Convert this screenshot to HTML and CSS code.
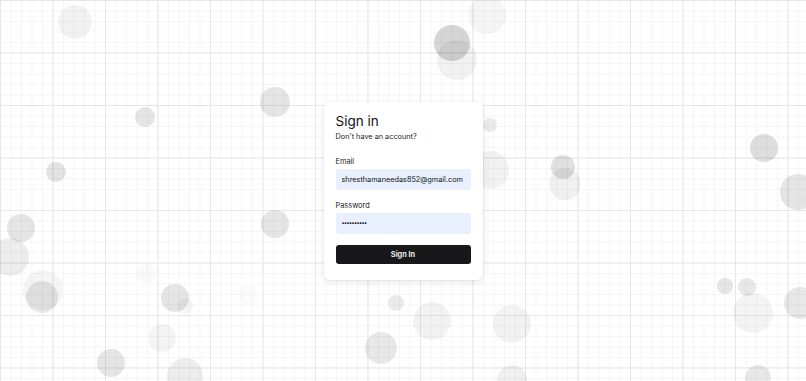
FILE: index.html
```html
<!DOCTYPE html>
<html lang="en">
<head>
<meta charset="utf-8">
<title>Sign in</title>
<link rel="stylesheet" href="styles.css">
</head>
<body>
<div class="page">
  <div class="bubbles">
    <span class="bubble" style="left:58px;top:5px;width:34px;height:34px;opacity:.05"></span>
    <span class="bubble" style="left:434px;top:25px;width:36px;height:36px;opacity:.16"></span>
    <span class="bubble" style="left:468px;top:-4px;width:38px;height:38px;opacity:.04"></span>
    <span class="bubble" style="left:437px;top:40px;width:40px;height:40px;opacity:.05"></span>
    <span class="bubble" style="left:135px;top:107px;width:20px;height:20px;opacity:.10"></span>
    <span class="bubble" style="left:260px;top:87px;width:30px;height:30px;opacity:.10"></span>
    <span class="bubble" style="left:483px;top:118px;width:14px;height:14px;opacity:.08"></span>
    <span class="bubble" style="left:46px;top:162px;width:20px;height:20px;opacity:.11"></span>
    <span class="bubble" style="left:471px;top:151px;width:38px;height:38px;opacity:.05"></span>
    <span class="bubble" style="left:551px;top:155px;width:24px;height:24px;opacity:.12"></span>
    <span class="bubble" style="left:549px;top:168px;width:32px;height:32px;opacity:.06"></span>
    <span class="bubble" style="left:750px;top:134px;width:28px;height:28px;opacity:.13"></span>
    <span class="bubble" style="left:780px;top:174px;width:36px;height:36px;opacity:.10"></span>
    <span class="bubble" style="left:7px;top:214px;width:28px;height:28px;opacity:.10"></span>
    <span class="bubble" style="left:-9px;top:238px;width:38px;height:38px;opacity:.07"></span>
    <span class="bubble" style="left:261px;top:210px;width:28px;height:28px;opacity:.10"></span>
    <span class="bubble" style="left:26px;top:281px;width:32px;height:32px;opacity:.09"></span>
    <span class="bubble" style="left:23px;top:270px;width:40px;height:40px;opacity:.04"></span>
    <span class="bubble" style="left:136px;top:263px;width:20px;height:20px;opacity:.025"></span>
    <span class="bubble" style="left:238px;top:285px;width:20px;height:20px;opacity:.015"></span>
    <span class="bubble" style="left:161px;top:284px;width:28px;height:28px;opacity:.10"></span>
    <span class="bubble" style="left:177px;top:298px;width:16px;height:16px;opacity:.035"></span>
    <span class="bubble" style="left:148px;top:324px;width:28px;height:28px;opacity:.045"></span>
    <span class="bubble" style="left:97px;top:349px;width:28px;height:28px;opacity:.10"></span>
    <span class="bubble" style="left:167px;top:358px;width:36px;height:36px;opacity:.07"></span>
    <span class="bubble" style="left:388px;top:295px;width:16px;height:16px;opacity:.08"></span>
    <span class="bubble" style="left:413px;top:302px;width:38px;height:38px;opacity:.05"></span>
    <span class="bubble" style="left:493px;top:305px;width:38px;height:38px;opacity:.05"></span>
    <span class="bubble" style="left:365px;top:332px;width:32px;height:32px;opacity:.09"></span>
    <span class="bubble" style="left:497px;top:365px;width:30px;height:30px;opacity:.06"></span>
    <span class="bubble" style="left:717px;top:278px;width:16px;height:16px;opacity:.10"></span>
    <span class="bubble" style="left:738px;top:278px;width:18px;height:18px;opacity:.09"></span>
    <span class="bubble" style="left:733px;top:293px;width:40px;height:40px;opacity:.045"></span>
    <span class="bubble" style="left:784px;top:287px;width:32px;height:32px;opacity:.09"></span>
    <span class="bubble" style="left:745px;top:365px;width:26px;height:26px;opacity:.09"></span>
  </div>

  <form class="card">
    <h1 class="title">Sign in</h1>
    <p class="subtitle">Don't have an account?</p>

    <label class="label label-first" for="email">Email</label>
    <input class="field" id="email" type="text" value="shresthamaneedas852@gmail.com">

    <label class="label" for="password">Password</label>
    <input class="field field-pass" id="password" type="password" value="1234567890">

    <button class="btn" type="button">Sign In</button>
  </form>
</div>
</body>
</html>
```

FILE: styles.css
```css
* { box-sizing: border-box; }

html, body {
  margin: 0;
  padding: 0;
  width: 100%;
  height: 100%;
}

body {
  font-family: Inter, "Liberation Sans", Arial, sans-serif;
  color: #111;
  background-color: #fff;
  background-image:
    linear-gradient(to right, #e7e7e7 1px, transparent 1px),
    linear-gradient(to bottom, #e7e7e7 1px, transparent 1px),
    linear-gradient(to right, #f5f5f5 1px, transparent 1px),
    linear-gradient(to bottom, #f5f5f5 1px, transparent 1px);
  background-size: 52.5px 52.5px, 52.5px 52.5px, 10.5px 10.5px, 10.5px 10.5px;
  overflow: hidden;
}

.page {
  position: relative;
  width: 100%;
  height: 100%;
  display: flex;
  align-items: center;
  justify-content: center;
}

.bubbles {
  position: absolute;
  inset: 0;
  overflow: hidden;
}

.bubble {
  position: absolute;
  border-radius: 50%;
  background: #000;
}

.card {
  position: relative;
  width: 159px;
  margin: 0;
  padding: 11px 12px 16px;
  background: #fff;
  border-radius: 6px;
  box-shadow: 0 1px 3px rgba(0, 0, 0, 0.07), 0 2px 10px rgba(0, 0, 0, 0.07);
  display: flex;
  flex-direction: column;
}

.title {
  margin: 0;
  font-size: 13.5px;
  line-height: 17px;
  font-weight: 400;
  color: #111;
}

.subtitle {
  margin: 2px 0 0;
  font-size: 7.3px;
  line-height: 10px;
  color: #222;
}

.label {
  display: block;
  margin-top: 11px;
  font-size: 7.4px;
  line-height: 10px;
  font-weight: 400;
  color: #1a1a1a;
}

.label-first {
  margin-top: 15px;
}

.field {
  display: block;
  width: 100%;
  height: 21px;
  margin-top: 2px;
  padding: 0 6px;
  border: none;
  border-radius: 3px;
  background: #e8f0fe;
  font-family: Inter, "Liberation Sans", Arial, sans-serif;
  font-size: 7.3px;
  color: #111;
  outline: none;
}

.field-pass {
  font-size: 5.5px;
  letter-spacing: -0.6px;
}

.btn {
  display: block;
  width: 100%;
  height: 19px;
  margin-top: 11px;
  padding: 0;
  border: none;
  border-radius: 3px;
  background: #18181b;
  color: #fff;
  font-family: Inter, "Liberation Sans", Arial, sans-serif;
  font-size: 7.4px;
  font-weight: 600;
  cursor: pointer;
}
```
